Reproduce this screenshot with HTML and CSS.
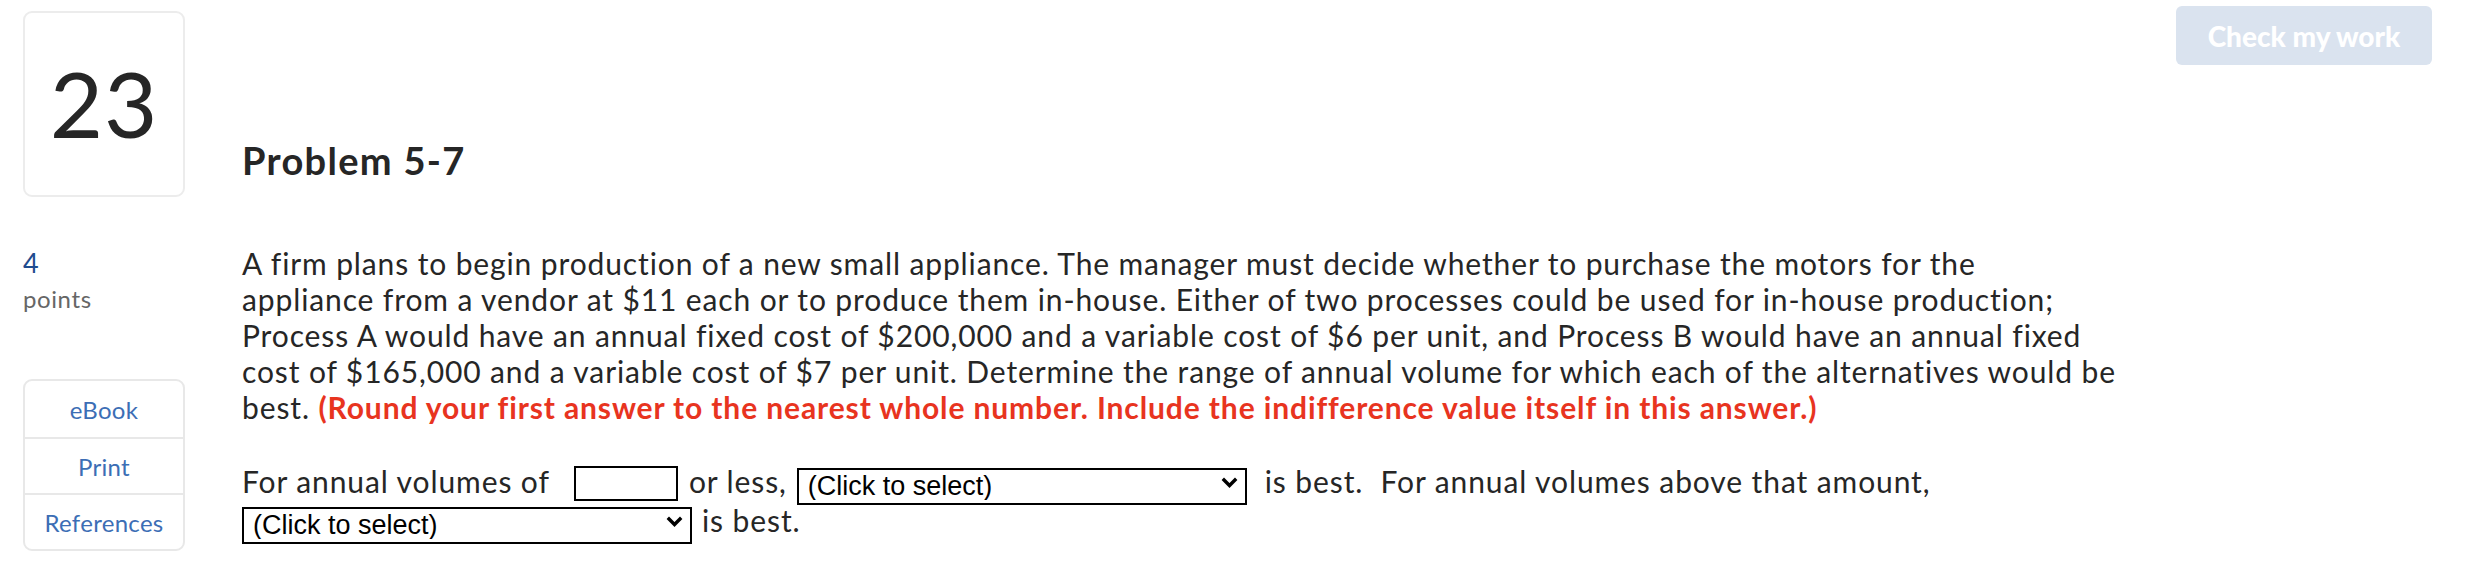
FILE: index.html
```html
<!DOCTYPE html>
<html lang="en">
<head>
<meta charset="utf-8">
<title>Problem 5-7</title>
<link rel="stylesheet" href="styles.css">
</head>
<body>
<div class="page">
  <header class="header">
    <div class="numbox">23</div>
    <div class="header-main">
      <h1 class="title">Problem 5-7</h1>
      <button class="check-btn" type="button">Check my work</button>
    </div>
  </header>

  <div class="content">
    <aside class="side">
      <div class="points">
        <div class="points-num">4</div>
        <div class="points-label">points</div>
      </div>
      <nav class="tools">
        <a class="tool" href="#">eBook</a>
        <a class="tool" href="#">Print</a>
        <a class="tool" href="#">References</a>
      </nav>
    </aside>

    <main class="main">
      <p class="question">A firm plans to begin production of a new small appliance. The manager must decide whether to purchase the motors for the<br>appliance from a vendor at $11 each or to produce them in-house. Either of two processes could be used for in-house production;<br>Process A would have an annual fixed cost of $200,000 and a variable cost of $6 per unit, and Process B would have an annual fixed<br>cost of $165,000 and a variable cost of $7 per unit. Determine the range of annual volume for which each of the alternatives would be<br>best. <strong class="note">(Round your first answer to the nearest whole number. Include the indifference value itself in this answer.)</strong></p>

      <p class="answer">For annual volumes of<input class="num-input" type="text" aria-label="annual volume">or less,<span class="select-wrap select-first"><select class="choice"><option>(Click to select)</option><option>Vendor</option><option>Process A</option><option>Process B</option></select><svg class="chev" viewBox="0 0 17 11" width="17" height="11"><polyline points="1.8,1.8 8.5,8.5 15.2,1.8" fill="none" stroke="#000" stroke-width="3.4"/></svg></span>is best.&nbsp; For annual volumes above that amount, <span class="select-wrap"><select class="choice"><option>(Click to select)</option><option>Vendor</option><option>Process A</option><option>Process B</option></select><svg class="chev" viewBox="0 0 17 11" width="17" height="11"><polyline points="1.8,1.8 8.5,8.5 15.2,1.8" fill="none" stroke="#000" stroke-width="3.4"/></svg></span>is best.</p>
    </main>
  </div>
</div>
</body>
</html>
```
FILE: styles.css
```css
* { box-sizing: border-box; }

html, body {
  margin: 0;
  padding: 0;
  background: #fff;
}

body {
  font-family: Lato, "Open Sans", Arial, sans-serif;
  color: #2b2b2b;
  font-variant-ligatures: none;
}

.page {
  padding: 6px 48px 0 23px;
}

/* Header */
.header {
  display: flex;
}

.numbox {
  width: 162px;
  height: 186px;
  margin-top: 5px;
  border: 2px solid #ececec;
  border-radius: 9px;
  display: flex;
  align-items: center;
  justify-content: center;
  font-size: 92px;
  line-height: 1;
  letter-spacing: 1px;
  color: #262626;
  padding-bottom: 2px;
}

.header-main {
  flex: 1;
  margin-left: 57px;
  display: flex;
  justify-content: space-between;
  align-items: flex-start;
}

.title {
  margin: 132px 0 0;
  font-size: 38px;
  line-height: 44px;
  font-weight: 700;
  letter-spacing: 1.3px;
  color: #262626;
}

.check-btn {
  width: 256px;
  height: 59px;
  border: 0;
  border-radius: 6px;
  background: #dae3ef;
  color: #fff;
  font-family: Lato, "Open Sans", Arial, sans-serif;
  font-weight: 900;
  font-size: 28px;
  padding: 0;
  cursor: default;
}

/* Content */
.content {
  display: grid;
  grid-template-columns: 162px 1fr;
  column-gap: 57px;
  margin-top: 48px;
}

.points-num {
  font-size: 27px;
  line-height: 36px;
  color: #1f4c8f;
}

.points-label {
  font-size: 24px;
  line-height: 36px;
  letter-spacing: 0.6px;
  color: #666;
}

.tools {
  margin-top: 62px;
  border: 2px solid #e8e8e8;
  border-radius: 9px;
  display: flex;
  flex-direction: column;
}

.tool {
  height: 56px;
  display: flex;
  align-items: center;
  justify-content: center;
  font-size: 24px;
  letter-spacing: 0.3px;
  color: #3c6eb5;
  text-decoration: none;
}

.tool + .tool {
  border-top: 2px solid #e8e8e8;
}

.main {
  max-width: 1900px;
}

.question {
  margin: 0;
  font-size: 30px;
  line-height: 36px;
  letter-spacing: 0.88px;
  color: #262626;
}

.note {
  color: #e8341f;
  font-weight: 700;
}

.answer {
  margin: 37px 0 0;
  font-size: 30px;
  line-height: 39px;
  letter-spacing: 0.9px;
  color: #262626;
}

.num-input {
  display: inline-block;
  vertical-align: bottom;
  width: 104px;
  height: 35px;
  margin: 0 11px 0 24px;
  border: 2px solid #000;
  border-radius: 0;
  padding: 0 6px;
  font: 27px "Liberation Sans", Arial, sans-serif;
  background: #fff;
}

.select-wrap {
  position: relative;
  display: inline-block;
  vertical-align: bottom;
  width: 450px;
  height: 37px;
  margin-right: 10px;
  letter-spacing: 0;
}

.select-first {
  margin-left: 10px;
  margin-right: 18px;
}

.choice {
  -webkit-appearance: none;
  appearance: none;
  width: 100%;
  height: 100%;
  border: 2px solid #000;
  border-radius: 0;
  background: #fff;
  color: #000;
  font: 27px/1 "Liberation Sans", Arial, sans-serif;
  padding: 0 36px 0 9px;
  margin: 0;
}

.chev {
  position: absolute;
  right: 9px;
  top: 13px;
  pointer-events: none;
}
```
